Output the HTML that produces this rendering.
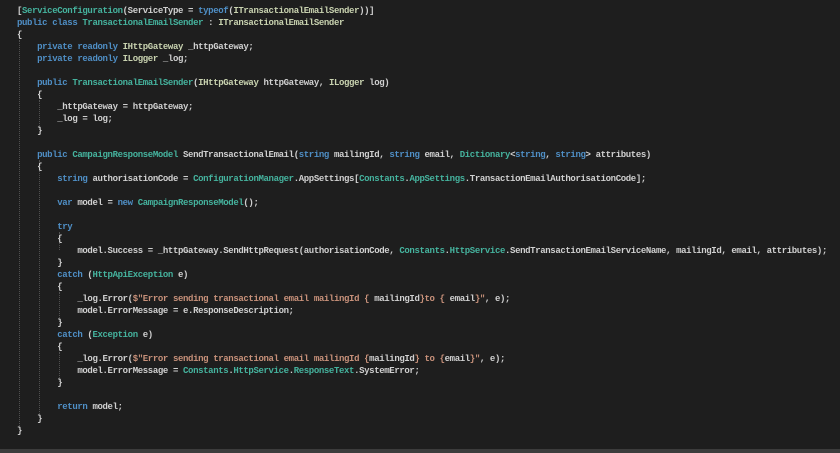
<!DOCTYPE html>
<html><head><meta charset="utf-8"><style>
html,body{margin:0;padding:0;background:#1e1e1e;width:840px;height:453px;overflow:hidden}
pre{margin:0;position:absolute;left:17px;top:5px;font-family:"Liberation Mono",monospace;font-size:9px;letter-spacing:-0.37px;line-height:12px;color:#d0d0d0;font-weight:bold}
.k{color:#4f8fc6}.t{color:#45b39e}.s{color:#c8917a}.i{color:#c9d3b0}
.g{position:absolute;border-left:1px dotted #505050;width:0}
.bar{position:absolute;left:0;top:449px;width:840px;height:4px;background:#3c3c3c}
</style></head><body>
<div class="g" style="left:19px;top:40px;height:386px"></div>
<div class="g" style="left:39px;top:100px;height:30px"></div>
<div class="g" style="left:39px;top:160px;height:254px"></div>
<div class="g" style="left:59px;top:232px;height:18px"></div>
<div class="g" style="left:59px;top:292px;height:30px"></div>
<div class="g" style="left:59px;top:352px;height:30px"></div>
<pre>[<span class="t">ServiceConfiguration</span>(ServiceType = <span class="k">typeof</span>(<span class="i">ITransactionalEmailSender</span>))]
<span class="k">public class</span> <span class="t">TransactionalEmailSender</span> : <span class="i">ITransactionalEmailSender</span>
{
    <span class="k">private readonly</span> <span class="i">IHttpGateway</span> _httpGateway;
    <span class="k">private readonly</span> <span class="i">ILogger</span> _log;

    <span class="k">public</span> <span class="t">TransactionalEmailSender</span>(<span class="i">IHttpGateway</span> httpGateway, <span class="i">ILogger</span> log)
    {
        _httpGateway = httpGateway;
        _log = log;
    }

    <span class="k">public</span> <span class="t">CampaignResponseModel</span> SendTransactionalEmail(<span class="k">string</span> mailingId, <span class="k">string</span> email, <span class="t">Dictionary</span>&lt;<span class="k">string</span>, <span class="k">string</span>&gt; attributes)
    {
        <span class="k">string</span> authorisationCode = <span class="t">ConfigurationManager</span>.AppSettings[<span class="t">Constants</span>.<span class="t">AppSettings</span>.TransactionEmailAuthorisationCode];

        <span class="k">var</span> model = <span class="k">new</span> <span class="t">CampaignResponseModel</span>();

        <span class="k">try</span>
        {
            model.Success = _httpGateway.SendHttpRequest(authorisationCode, <span class="t">Constants</span>.<span class="t">HttpService</span>.SendTransactionEmailServiceName, mailingId, email, attributes);
        }
        <span class="k">catch</span> (<span class="t">HttpApiException</span> e)
        {
            _log.Error(<span class="s">$"Error sending transactional email mailingId { </span>mailingId<span class="s">}to { </span>email<span class="s">}"</span>, e);
            model.ErrorMessage = e.ResponseDescription;
        }
        <span class="k">catch</span> (<span class="t">Exception</span> e)
        {
            _log.Error(<span class="s">$"Error sending transactional email mailingId {</span>mailingId<span class="s">} to {</span>email<span class="s">}"</span>, e);
            model.ErrorMessage = <span class="t">Constants</span>.<span class="t">HttpService</span>.<span class="t">ResponseText</span>.SystemError;
        }

        <span class="k">return</span> model;
    }
}</pre>
<div class="bar"></div>
</body></html>
